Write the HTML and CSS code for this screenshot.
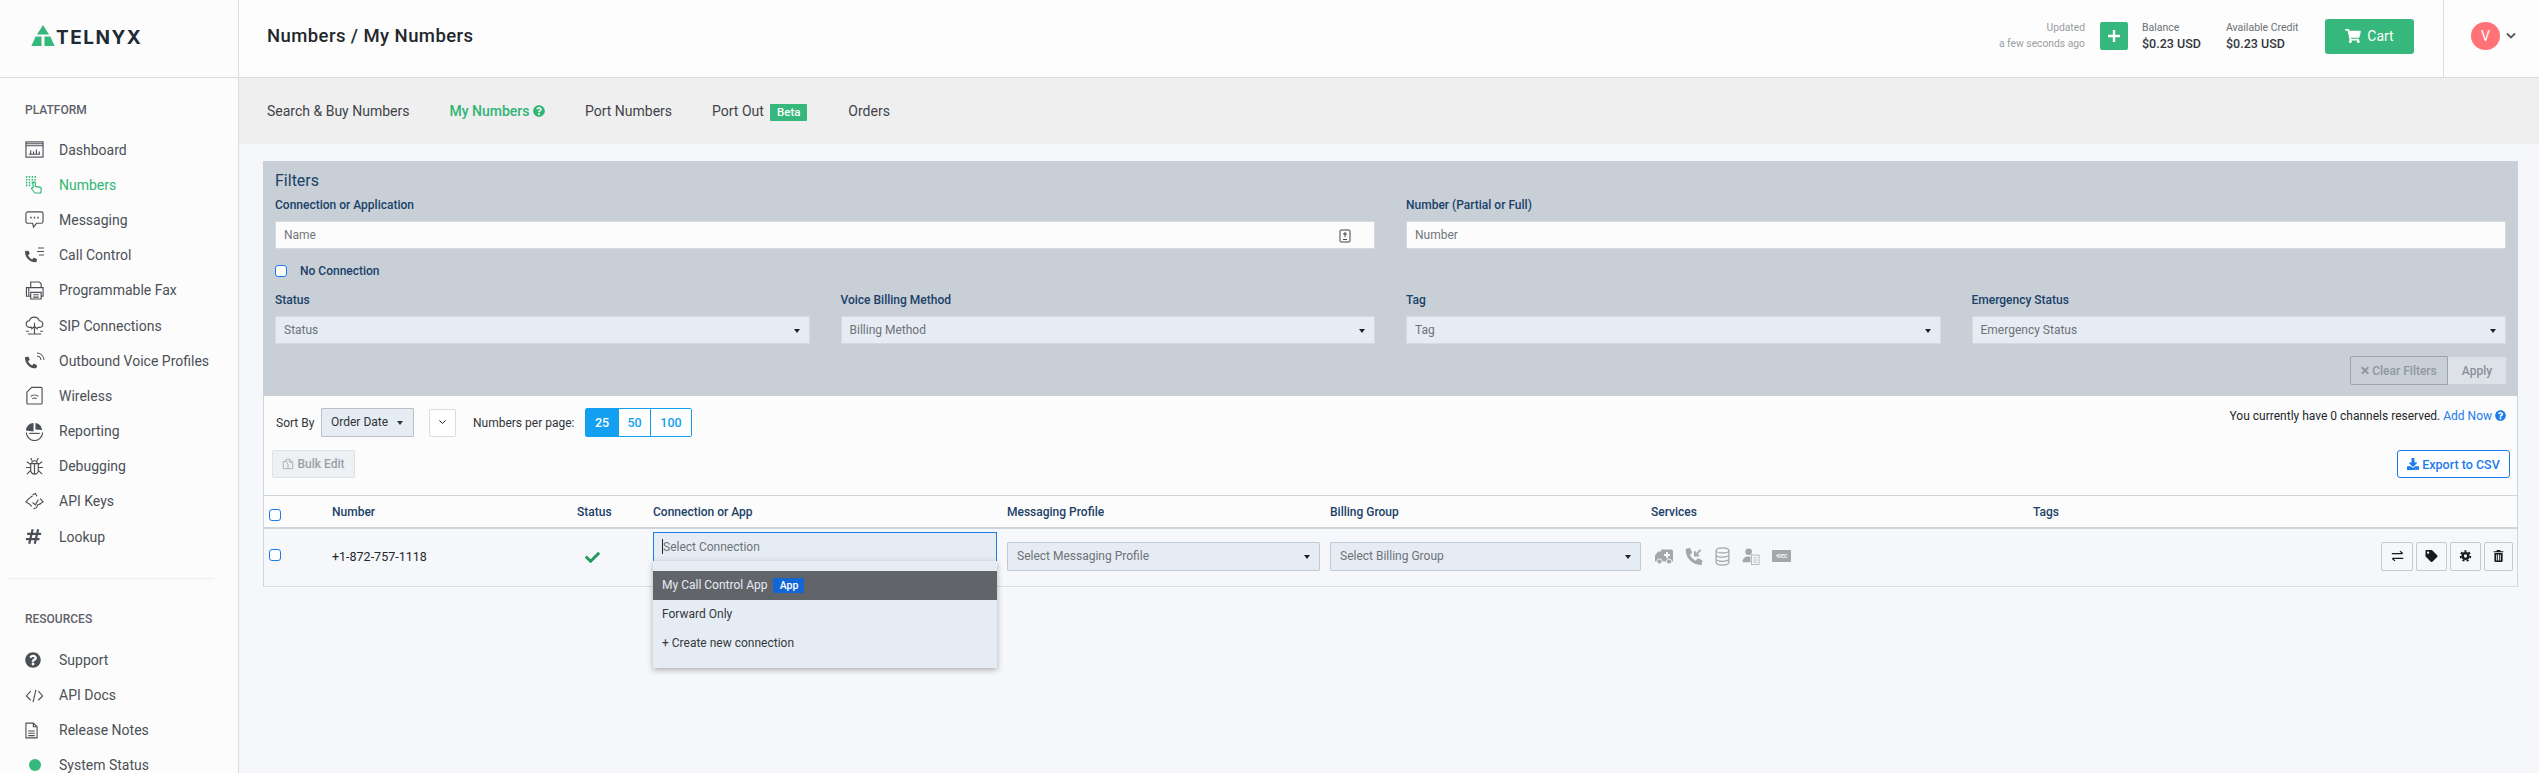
FILE: index.html
```html
<!DOCTYPE html>
<html lang="en">
<head>
    <meta charset="UTF-8">
    <title>Numbers / My Numbers</title>
    <link rel="stylesheet" href="styles.css">
</head>
<body>
    <svg class="defs" width="0" height="0">
        <symbol id="i-phone" viewBox="0 0 512 512"><path transform="matrix(-1 0 0 1 512 0)" d="M493.4 24.6l-104-24c-11.3-2.6-22.9 3.3-27.5 13.9l-48 112c-4.2 9.8-1.4 21.3 6.9 28l60.6 49.6c-36 76.7-98.9 140.5-177.2 177.2l-49.6-60.6c-6.8-8.3-18.2-11.1-28-6.9l-112 48C3.9 366.5-2 378.1.6 389.4l24 104C27.1 504.2 36.7 512 48 512c256.1 0 464-207.5 464-464 0-11.2-7.7-20.9-18.6-23.4z"/></symbol>
        <symbol id="i-question" viewBox="0 0 512 512"><path d="M504 256c0 136.997-111.043 248-248 248S8 392.997 8 256C8 119.083 119.043 8 256 8s248 111.083 248 248zM262.655 90c-54.497 0-89.255 22.957-116.549 63.758-3.536 5.286-2.353 12.415 2.715 16.258l34.699 26.31c5.205 3.947 12.621 3.008 16.665-2.122 17.864-22.658 30.113-35.797 57.303-35.797 20.429 0 45.698 13.148 45.698 32.958 0 14.976-12.363 22.667-32.534 33.976C247.128 238.528 216 254.941 216 296v4c0 6.627 5.373 12 12 12h56c6.627 0 12-5.373 12-12v-1.333c0-28.462 83.186-29.647 83.186-106.667 0-58.002-60.165-102-116.531-102zM256 338c-25.365 0-46 20.635-46 46 0 25.364 20.635 46 46 46s46-20.636 46-46c0-25.365-20.635-46-46-46z"/></symbol>
    </svg>

    <div class="app">
        <!-- Sidebar -->
        <aside class="sidebar">
            <div class="logo">
                <svg class="logo-mark" viewBox="0 0 24 22"><path d="M12 0l6 9.5H6z"/><path d="M4.6 11.5h5.9V21H0.4z"/><path d="M13.5 11.5h5.9l4.2 9.5H13.5z"/></svg>
                <span class="logo-text">TELNYX</span>
            </div>
            <div class="nav-title nav-title-first">PLATFORM</div>
            <nav class="nav">
                <a class="nav-item"><svg class="nav-icon" viewBox="0 0 20 18"><rect x="1" y="1" width="18" height="16"/><path d="M1 5h18M1 3h18M4 14h12M6 14v-4M9 14v-3M12 14v-5M15 14v-3"/></svg>Dashboard</a>
                <a class="nav-item active"><svg class="nav-icon" viewBox="0 0 20 20"><path class="dots" d="M1 2h1.500M4 2h1.500M7 2h1.500M10 2h1.500M1 5h1.500M4 5h1.500M7 5h1.500M10 5h1.500M1 8h1.500M4 8h1.500M7 8h1.500M1 11h1.500M4 11h1.500"/><path d="M8.500 14V8.500a1.200 1.200 0 0 1 2.400 0V12l4.500.8c1.200.2 1.800 1.100 1.700 2.200l-.5 4H10.500l-3.300-4c-.9-1.300.6-2.400 1.300-1z"/></svg>Numbers</a>
                <a class="nav-item"><svg class="nav-icon" viewBox="0 0 20 18"><path d="M3 1h14a2 2 0 0 1 2 2v8a2 2 0 0 1-2 2h-5l-3 4-1-4H3a2 2 0 0 1-2-2V3a2 2 0 0 1 2-2z"/><path class="dots" d="M5.500 7h1.500M9.300 7h1.500M13 7h1.500"/></svg>Messaging</a>
                <a class="nav-item"><svg class="nav-fill nav-small" viewBox="0 0 512 512"><use href="#i-phone"/></svg><svg class="nav-lines" viewBox="0 0 9 12"><path d="M2 1h6M1 4.500h7M3 8h5"/></svg>Call Control</a>
                <a class="nav-item"><svg class="nav-icon" viewBox="0 0 20 20"><path d="M6 7V1h9l2 2v4M4 7H1.500v9H4zM4 7h15v9h-2M6 12h11v7H6zM8.500 14.500h6M8.500 17h6M4 16h2"/></svg>Programmable Fax</a>
                <a class="nav-item"><svg class="nav-icon" viewBox="0 0 20 20"><path d="M5 12a3.500 3.500 0 0 1-.5-7 5.500 5.500 0 0 1 10.500 0 3.500 3.500 0 0 1 .5 7h-2.500M7.500 12H5M10 7v12M10 11l-3.500 3M10 11l3.500 3M1 16h3M16 16h3M3 19h14"/></svg>SIP Connections</a>
                <a class="nav-item"><svg class="nav-fill nav-small" viewBox="0 0 512 512"><use href="#i-phone"/></svg><svg class="nav-lines" viewBox="0 0 9 12"><path d="M1 4a4 4 0 0 1 4 4M1 1a7 7 0 0 1 7 7"/></svg>Outbound Voice Profiles</a>
                <a class="nav-item"><svg class="nav-icon" viewBox="0 0 20 20"><path d="M7 1.500h10a1 1 0 0 1 1 1V18a1 1 0 0 1-1 1H3a1 1 0 0 1-1-1V6.500zM6 11a6 6 0 0 1 8 0M7.800 13.500a3.500 3.500 0 0 1 4.400 0M10 16v.1"/></svg>Wireless</a>
                <a class="nav-item"><svg class="nav-icon" viewBox="0 0 20 20"><path class="pie" d="M9 1a8 8 0 0 0-8 8l8 1zM11 1v7l7 .5A8 8 0 0 0 11 1z"/><path d="M1.500 11a8.500 8.500 0 0 0 17 0"/><path d="M4.500 12h11"/></svg>Reporting</a>
                <a class="nav-item"><svg class="nav-icon" viewBox="0 0 20 20"><path d="M6 7h8v7a4 4 0 0 1-8 0zM7 7a3 3 0 0 1 6 0M10 7v11M1 11h5M14 11h5M2 5l4 3M18 5l-4 3M2 18l4-4M18 18l-4-4M6 1l1.500 3M14 1l-1.500 3"/></svg>Debugging</a>
                <a class="nav-item"><svg class="nav-icon" viewBox="0 0 20 20"><path d="M8 3l3-1.500 1.500 3M4 7L1 10.500 5 13M16 7l3 3.500-4 2.500M9 18l3-1.500 1.500-3 3-1M4 7l4-3M7 15l-2-2M8 11l3 2.500 3-5.500"/></svg>API Keys</a>
                <a class="nav-item"><svg class="nav-icon nav-bold" viewBox="0 0 20 20"><path d="M9 1.500L5 18.500M15.500 1.500l-4 17M2.500 7h16.500M1 13h16"/></svg>Lookup</a>
            </nav>
            <div class="nav-divider"></div>
            <div class="nav-title">RESOURCES</div>
            <nav class="nav">
                <a class="nav-item"><svg class="nav-fill" viewBox="0 0 512 512"><use href="#i-question"/></svg>Support</a>
                <a class="nav-item"><svg class="nav-icon" viewBox="0 0 20 20"><path d="M6 5.500L1.500 10.500 6 15M14 5.500l4.500 5L14 15M11.500 4L8.500 17"/></svg>API Docs</a>
                <a class="nav-item"><svg class="nav-icon nav-doc" viewBox="0 0 14 18"><path d="M1 1h8l4 4v12H1zM9 1v4h4M3.500 9.500h7M3.500 12h7M3.500 14.500h7"/></svg>Release Notes</a>
                <a class="nav-item"><span class="status-dot"></span>System Status</a>
            </nav>
        </aside>

        <div class="main">
            <!-- Top bar -->
            <header class="topbar">
                <h1 class="page-title">Numbers / My Numbers</h1>
                <div class="updated">Updated<br>a few seconds ago</div>
                <button class="add-funds"><svg viewBox="0 0 14 14"><path d="M7 1v12M1 7h12"/></svg></button>
                <div class="money money-balance"><span>Balance</span><b>$0.23 USD</b></div>
                <div class="money money-credit"><span>Available Credit</span><b>$0.23 USD</b></div>
                <button class="cart"><svg viewBox="0 0 576 512"><path d="M528.12 301.319l47.273-208C578.806 78.301 567.391 64 551.99 64H159.208l-9.166-44.81C147.758 8.021 137.93 0 126.529 0H24C10.745 0 0 10.745 0 24v16c0 13.255 10.745 24 24 24h69.883l70.248 343.435C147.325 417.1 136 435.222 136 456c0 30.928 25.072 56 56 56s56-25.072 56-56c0-15.674-6.447-29.835-16.824-40h209.647C430.447 426.165 424 440.326 424 456c0 30.928 25.072 56 56 56s56-25.072 56-56c0-22.172-12.888-41.332-31.579-50.405l5.517-24.276c3.413-15.018-8.002-29.319-23.403-29.319H218.117l-6.545-32h293.145c11.206 0 20.92-7.754 23.403-18.681z"/></svg>Cart</button>
                <div class="user">
                    <span class="avatar">V</span>
                    <svg class="user-chevron" viewBox="0 0 10 7"><path d="M1 1.500l4 4 4-4"/></svg>
                </div>
            </header>

            <!-- Tabs -->
            <div class="tabs">
                <a class="tab">Search &amp; Buy Numbers</a>
                <a class="tab tab-active">My Numbers <svg class="tab-help" viewBox="0 0 512 512"><use href="#i-question"/></svg></a>
                <a class="tab">Port Numbers</a>
                <a class="tab">Port Out <span class="beta">Beta</span></a>
                <a class="tab">Orders</a>
            </div>

            <div class="content">
                <!-- Filters -->
                <section class="filters">
                    <h2 class="filters-title">Filters</h2>
                    <div class="filter-grid">
                        <div class="field span-2">
                            <label class="field-label">Connection or Application</label>
                            <div class="text-input">
                                <input type="text" placeholder="Name">
                                <svg class="input-icon" viewBox="0 0 12 14"><rect x="1" y="1" width="10" height="12" rx="1"/><path d="M6 3v5M4 5h4M4 10.500h4"/></svg>
                            </div>
                        </div>
                        <div class="field span-2">
                            <label class="field-label">Number (Partial or Full)</label>
                            <div class="text-input"><input type="text" placeholder="Number"></div>
                        </div>
                    </div>
                    <label class="no-connection"><input class="check" type="checkbox">No Connection</label>
                    <div class="filter-grid">
                        <div class="field">
                            <label class="field-label">Status</label>
                            <div class="select">Status<i class="caret"></i></div>
                        </div>
                        <div class="field">
                            <label class="field-label">Voice Billing Method</label>
                            <div class="select">Billing Method<i class="caret"></i></div>
                        </div>
                        <div class="field">
                            <label class="field-label">Tag</label>
                            <div class="select">Tag<i class="caret"></i></div>
                        </div>
                        <div class="field">
                            <label class="field-label">Emergency Status</label>
                            <div class="select">Emergency Status<i class="caret"></i></div>
                        </div>
                    </div>
                    <div class="filter-actions">
                        <button class="btn-clear"><svg viewBox="0 0 352 512"><path d="M242.72 256l100.07-100.07c12.28-12.28 12.28-32.19 0-44.48l-22.24-22.24c-12.28-12.28-32.19-12.28-44.48 0L176 189.28 75.93 89.21c-12.28-12.28-32.19-12.28-44.48 0L9.21 111.45c-12.28 12.28-12.28 32.19 0 44.48L109.28 256 9.21 356.07c-12.28 12.28-12.28 32.19 0 44.48l22.24 22.24c12.28 12.28 32.2 12.28 44.48 0L176 322.72l100.07 100.07c12.28 12.28 32.2 12.28 44.48 0l22.24-22.24c12.28-12.28 12.28-32.19 0-44.48L242.72 256z"/></svg>Clear Filters</button>
                        <button class="btn-apply">Apply</button>
                    </div>
                </section>

                <!-- Number list -->
                <section class="list">
                    <div class="toolbar">
                        <span class="sort-label">Sort By</span>
                        <div class="sort-select">Order Date<i class="caret"></i></div>
                        <button class="sort-dir"><svg viewBox="0 0 10 7"><path d="M1.500 1.500L5 5l3.500-3.500"/></svg></button>
                        <span class="per-page-label">Numbers per page:</span>
                        <div class="per-page">
                            <button class="page-btn selected">25</button>
                            <button class="page-btn">50</button>
                            <button class="page-btn">100</button>
                        </div>
                        <div class="channels">You currently have 0 channels reserved. <a>Add Now <svg viewBox="0 0 512 512"><use href="#i-question"/></svg></a></div>
                    </div>
                    <div class="toolbar-second">
                        <button class="bulk-edit"><svg viewBox="0 0 14 14"><path d="M5 4V1.500h4L12.500 5v7.500H7M5 4H1.500v8.500H7V7.500zM9 1.500V5h3.500"/></svg>Bulk Edit</button>
                        <button class="export"><svg viewBox="0 0 512 512"><path d="M216 0h80c13.300 0 24 10.700 24 24v168h87.700c17.800 0 26.700 21.500 14.100 34.100L269.700 378.300c-7.500 7.500-19.800 7.500-27.300 0L90.100 226.100c-12.600-12.600-3.700-34.100 14.100-34.100H192V24c0-13.300 10.700-24 24-24zm296 376v112c0 13.300-10.700 24-24 24H24c-13.300 0-24-10.700-24-24V376c0-13.300 10.700-24 24-24h146.700l49 49c20.100 20.100 52.500 20.100 72.600 0l49-49H488c13.300 0 24 10.700 24 24zm-124 88c0-11-9-20-20-20s-20 9-20 20 9 20 20 20 20-9 20-20zm64 0c0-11-9-20-20-20s-20 9-20 20 9 20 20 20 20-9 20-20z"/></svg>Export to CSV</button>
                    </div>

                    <table class="numbers">
                        <thead>
                            <tr>
                                <th class="col-check"><input class="check" type="checkbox"></th>
                                <th class="col-number">Number</th>
                                <th class="col-status">Status</th>
                                <th class="col-conn">Connection or App</th>
                                <th class="col-msg">Messaging Profile</th>
                                <th class="col-bill">Billing Group</th>
                                <th class="col-services">Services</th>
                                <th>Tags</th>
                            </tr>
                        </thead>
                        <tbody>
                            <tr>
                                <td><input class="check" type="checkbox"></td>
                                <td class="number-cell">+1-872-757-1118</td>
                                <td><svg class="ok" viewBox="0 0 512 512"><path d="M173.898 439.404l-166.4-166.4c-9.997-9.997-9.997-26.206 0-36.204l36.203-36.204c9.997-9.998 26.207-9.998 36.204 0L192 312.690 432.095 72.596c9.997-9.997 26.207-9.997 36.204 0l36.203 36.204c9.997 9.997 9.997 26.206 0 36.204l-294.400 294.401c-9.998 9.997-26.207 9.997-36.204-.001z"/></svg></td>
                                <td class="conn-cell">
                                    <div class="conn">
                                        <div class="conn-input"><span class="cursor"></span>Select Connection</div>
                                        <div class="conn-menu">
                                            <div class="conn-option highlighted">My Call Control App <span class="app-badge">App</span></div>
                                            <div class="conn-option">Forward Only</div>
                                            <div class="conn-option">+ Create new connection</div>
                                        </div>
                                    </div>
                                </td>
                                <td><div class="select row-select select-msg">Select Messaging Profile<i class="caret"></i></div></td>
                                <td><div class="select row-select select-bill">Select Billing Group<i class="caret"></i></div></td>
                                <td>
                                    <div class="services">
                                        <svg viewBox="0 0 18 16"><path d="M6 1h10a2 2 0 0 1 2 2v10H0V7l3-4h3z"/><circle class="hole" cx="4.500" cy="13" r="2.600"/><circle class="hole" cx="14" cy="13" r="2.600"/><path class="hole-line" d="M12 3.500v6M9 6.500h6"/></svg>
                                        <svg viewBox="0 0 18 18"><use href="#i-phone"/><path class="hole-arrow" d="M16 2l-6 6M10 3.500V8h4.500"/></svg>
                                        <svg class="db" viewBox="0 0 16 20"><ellipse cx="8" cy="3.500" rx="6.800" ry="2.700"/><path d="M1.200 3.500v13c0 1.500 3 2.700 6.800 2.700s6.800-1.200 6.800-2.700v-13M1.200 8c0 1.500 3 2.700 6.800 2.700s6.800-1.200 6.800-2.700M1.200 12.500c0 1.500 3 2.700 6.800 2.700s6.800-1.200 6.800-2.700"/></svg>
                                        <svg viewBox="0 0 18 18"><circle cx="6.500" cy="4" r="3.500"/><path d="M0 15c0-4 2.500-6 6.500-6 1.500 0 2 .3 2 .3V15z"/><rect class="paper" x="9.500" y="7.500" width="8" height="10"/><path class="paper-line" d="M11.500 10.500h4M11.500 12.800h4M11.500 15h4"/></svg>
                                        <span class="rec">&bull;REC</span>
                                    </div>
                                </td>
                                <td>
                                    <div class="row-actions">
                                        <button class="act act-swap"><svg viewBox="0 0 16 14"><path d="M1 4h13M11 1l3.500 3M15 10H2M5 13l-3.500-3"/></svg></button>
                                        <button class="act act-tag"><svg class="solid" viewBox="0 0 512 512"><path d="M0 252.118V48C0 21.490 21.490 0 48 0h204.118a48 48 0 0 1 33.941 14.059l211.882 211.882c18.745 18.745 18.745 49.137 0 67.882L293.823 497.941c-18.745 18.745-49.137 18.745-67.882 0L14.059 286.059A48 48 0 0 1 0 252.118zM112 64c-26.510 0-48 21.490-48 48s21.490 48 48 48 48-21.490 48-48-21.490-48-48-48z"/></svg></button>
                                        <button class="act act-cog"><svg viewBox="0 0 14 14"><circle class="teeth" cx="7" cy="7" r="5.700"/><circle class="body" cx="7" cy="7" r="4.800"/><circle class="hole" cx="7" cy="7" r="1.900"/></svg></button>
                                        <button class="act act-trash"><svg class="solid" viewBox="0 0 14 16"><path d="M5 0h4l1 1.500h3.500V3H.500V1.500H4zM1.500 4h11v10.500a1.500 1.500 0 0 1-1.500 1.500H3a1.500 1.500 0 0 1-1.500-1.500zM4 6v8h1.300V6zm2.350 0v8h1.300V6zm2.350 0v8H10V6z" fill-rule="evenodd"/></svg></button>
                                    </div>
                                </td>
                            </tr>
                        </tbody>
                    </table>
                </section>
            </div>
        </div>
    </div>
</body>
</html>
```

FILE: styles.css
```css
* {
    box-sizing: border-box;
}

html, body {
    margin: 0;
    padding: 0;
    height: 100%;
    overflow: hidden;
}

body {
    font-family: Roboto, "Liberation Sans", sans-serif;
    font-size: 13px;
    color: #23272c;
    background: #f5f7fa;
}

button {
    font-family: inherit;
    cursor: pointer;
}

.defs {
    position: absolute;
}

.app {
    display: flex;
    height: 773px;
}

/* Sidebar */
.sidebar {
    flex: 0 0 239px;
    background: #fcfcfc;
    border-right: 1px solid #dcdcdc;
    height: 810px;
}

.logo {
    height: 78px;
    border-bottom: 1px solid #dcdcdc;
    margin-right: -1px;
    padding: 25px 0 0 31px;
    display: flex;
    align-items: flex-start;
}

.logo-mark {
    width: 24px;
    height: 22px;
    fill: #36b77b;
}

.logo-text {
    font-family: Inter, Roboto, sans-serif;
    font-weight: 700;
    font-size: 19px;
    line-height: 22px;
    letter-spacing: 1.5px;
    color: #1e2a35;
    margin: 2px 0 0 1px;
}

.nav-title {
    font-size: 12px;
    font-weight: 500;
    line-height: 14px;
    color: #5d6269;
    margin: 33px 0 0 25px;
    padding-bottom: 16px;
}

.nav-title-first {
    margin-top: 25px;
    padding-bottom: 15px;
}

.nav-item {
    display: flex;
    align-items: center;
    height: 35.2px;
    padding-left: 25px;
    font-size: 14px;
    color: #4b5057;
    position: relative;
}

.nav-item.active {
    color: #2fb574;
}

.nav-icon, .nav-fill {
    width: 19px;
    height: 19px;
    margin-right: 15px;
    flex: none;
}

.nav-icon {
    fill: none;
    stroke: currentColor;
    stroke-width: 1.2;
}

.nav-icon .dots {
    stroke-width: 1.800;
}

.nav-icon .pie {
    fill: currentColor;
    stroke: none;
}

.nav-icon.nav-bold {
    stroke-width: 2.600;
    width: 17px;
    margin-right: 17px;
}

.nav-icon.nav-doc {
    width: 13px;
    height: 17px;
    margin-right: 21px;
}

.nav-fill {
    width: 16px;
    height: 16px;
    fill: #4b5057;
    margin-right: 18px;
}

.nav-small {
    width: 12px;
    height: 13px;
    margin-top: 3px;
    margin-right: 0;
}

.nav-lines {
    width: 9px;
    height: 12px;
    fill: none;
    stroke: #4b5057;
    stroke-width: 1;
    margin: -5px 14px 0 -1px;
    flex: none;
}

.nav-divider {
    height: 1px;
    background: #eceef0;
    margin: 24px 24px 0 7px;
}

.status-dot {
    width: 12px;
    height: 12px;
    border-radius: 50%;
    background: #36b77b;
    margin: 0 18px 0 4px;
    flex: none;
}

/* Top bar */
.main {
    flex: 1;
    min-width: 0;
}

.topbar {
    height: 78px;
    background: #fdfdfd;
    border-bottom: 1px solid #dcdcdc;
    display: flex;
    align-items: center;
    padding-left: 28px;
}

.page-title {
    margin: 0 auto 5px 0;
    font-size: 18.500px;
    font-weight: 500;
    letter-spacing: .42px;
    color: #23272c;
}

.updated {
    font-size: 10.300px;
    line-height: 16px;
    color: #9a9da1;
    text-align: right;
    margin: -5px 15px 0 0;
}

.add-funds {
    width: 28px;
    height: 28px;
    background: #36b77b;
    border: 0;
    border-radius: 2px;
    padding: 7px;
    margin: 0 14px 5px 0;
}

.add-funds svg {
    display: block;
    stroke: #fff;
    stroke-width: 2.400;
}

.money {
    display: flex;
    flex-direction: column;
    margin-bottom: 5px;
}

.money-balance {
    width: 84px;
}

.money-credit {
    width: 99px;
}

.money span {
    font-size: 10.500px;
    line-height: 15px;
    color: #6c7075;
}

.money b {
    font-size: 12.500px;
    font-weight: 500;
    line-height: 17px;
    color: #33373c;
}

.cart {
    width: 89px;
    height: 35px;
    background: #36b77b;
    border: 0;
    border-radius: 3px;
    color: #fff;
    font-size: 14px;
    margin-bottom: 5px;
    display: flex;
    align-items: center;
    justify-content: center;
}

.cart svg {
    width: 16px;
    height: 14px;
    fill: #fff;
    margin-right: 6px;
}

.user {
    width: 96px;
    height: 77px;
    margin-left: 29px;
    border-left: 1px solid #dcdcdc;
    display: flex;
    align-items: center;
    padding: 0 0 5px 27px;
}

.avatar {
    width: 29px;
    height: 28px;
    border-radius: 50%;
    background: #ff7378;
    color: #fff;
    font-size: 14px;
    line-height: 28px;
    text-align: center;
}

.user-chevron {
    width: 10px;
    height: 7px;
    margin: -2px 0 0 6px;
    fill: none;
    stroke: #55595e;
    stroke-width: 1.800;
}

/* Tabs */
.tabs {
    height: 66px;
    background: #efefef;
    display: flex;
    align-items: center;
    padding: 0 0 0 28px;
    font-size: 14px;
    color: #3f4349;
}

.tab {
    margin-right: 40px;
    display: flex;
    align-items: center;
    white-space: pre;
}

.tab-active {
    color: #2fb574;
    font-weight: 500;
}

.tab-help {
    width: 12px;
    height: 12px;
    fill: #2fb574;
}

.beta {
    width: 37px;
    background: #36b77b;
    color: #fff;
    font-size: 11.500px;
    font-weight: 500;
    text-align: center;
    height: 17px;
    line-height: 17px;
    border-radius: 1px;
    margin: 2px 1px 0 3px;
}

/* Filters */
.content {
    padding: 17px 21px 0 24px;
}

.filters {
    height: 235px;
    background: #c8cfd6;
    padding: 9px 12px 0;
}

.filters-title {
    margin: 0;
    font-size: 16px;
    font-weight: 400;
    line-height: 22px;
    color: #1b4168;
}

.filter-grid {
    display: grid;
    grid-template-columns: repeat(4, 1fr);
    column-gap: 31px;
}

.span-2 {
    grid-column: span 2;
}

.field-label {
    display: block;
    font-size: 12px;
    font-weight: 500;
    line-height: 16px;
    color: #1b4168;
    margin-bottom: 8px;
}

.span-2 .field-label {
    margin-top: 5px;
}

.text-input {
    position: relative;
}

.text-input input {
    display: block;
    width: 100%;
    height: 28px;
    background: #fcfcfc;
    border: 1px solid #d5dae0;
    border-radius: 1px;
    padding: 0 8px;
    font-family: inherit;
    font-size: 12px;
    outline: none;
}

.text-input input::placeholder {
    color: #72767b;
    opacity: 1;
}

.input-icon {
    position: absolute;
    right: 24px;
    top: 8px;
    width: 12px;
    height: 14px;
    fill: none;
    stroke: #444;
    stroke-width: 1;
}

.check {
    appearance: none;
    -webkit-appearance: none;
    width: 12px;
    height: 12px;
    margin: 0;
    background: #fff;
    border: 1px solid #1b7bec;
    border-radius: 3px;
    display: block;
}

.no-connection {
    display: flex;
    align-items: center;
    height: 20px;
    margin: 12px 0 11px;
    font-size: 12px;
    font-weight: 500;
    color: #1b4168;
}

.no-connection .check {
    margin-right: 13px;
}

.select {
    position: relative;
    height: 28px;
    line-height: 26px;
    background: #e6ecf3;
    border: 1px solid #d5dae0;
    border-radius: 1px;
    padding: 0 8px;
    font-size: 12px;
    color: #6d7278;
}

.caret {
    position: absolute;
    right: 9px;
    top: 12px;
    border-top: 4px solid #222;
    border-left: 3.500px solid transparent;
    border-right: 3.500px solid transparent;
}

.filter-actions {
    display: flex;
    justify-content: flex-end;
    align-items: center;
    margin-top: 12px;
}

.btn-clear {
    height: 29px;
    width: 98px;
    background: #c8cfd6;
    border: 1px solid #9aa3ae;
    border-radius: 2px 0 0 2px;
    color: #8e97a2;
    font-size: 12px;
    font-weight: 500;
    padding: 0;
}

.btn-clear svg {
    width: 8px;
    height: 11px;
    fill: #8e97a2;
    margin-right: 3px;
    vertical-align: -1px;
}

.btn-apply {
    height: 27px;
    width: 58px;
    background: #dce2e8;
    border: 0;
    color: #8a8f96;
    font-size: 12px;
    font-weight: 500;
    padding: 0;
}

/* List */
.list {
    background: #fcfcfc;
    border-left: 1px solid #cdd5dd;
    border-right: 1px solid #cdd5dd;
    padding-top: 12px;
}

.toolbar {
    display: flex;
    align-items: center;
    height: 29px;
    padding-left: 12px;
    font-size: 12px;
    color: #30343a;
}

.sort-label {
    width: 45px;
}

.sort-select {
    position: relative;
    width: 93px;
    height: 29px;
    line-height: 27px;
    background: #e6ecf3;
    border: 1px solid #b9c0c8;
    border-radius: 1px;
    padding-left: 9px;
}

.sort-select .caret {
    right: 10px;
    top: 12px;
    border-top-color: #30343a;
}

.sort-dir {
    width: 27px;
    height: 28px;
    margin-left: 15px;
    background: #fff;
    border: 1px solid #d9dde2;
    border-radius: 2px;
    padding: 0 8px;
}

.sort-dir svg {
    display: block;
    fill: none;
    stroke: #222;
    stroke-width: 1.100;
}

.per-page-label {
    width: 112px;
    margin-left: 17px;
}

.per-page {
    display: flex;
    height: 29px;
    border: 1px solid #14a0f0;
    border-radius: 2px;
}

.page-btn {
    width: 32px;
    border: 0;
    border-right: 1px solid #14a0f0;
    background: #fff;
    color: #14a0f0;
    font-size: 12.500px;
    font-weight: 500;
    padding: 0;
}

.page-btn:last-child {
    width: 40px;
    border-right: 0;
}

.page-btn.selected {
    width: 33px;
    background: #14a0f0;
    color: #fff;
}

.channels {
    margin-left: auto;
    padding-right: 11px;
    margin-top: -13px;
    font-size: 12px;
    color: #23272c;
}

.channels a {
    color: #1b7bec;
}

.channels svg {
    width: 11px;
    height: 11px;
    fill: #1b7bec;
    vertical-align: -1px;
}

.toolbar-second {
    display: flex;
    justify-content: space-between;
    align-items: flex-start;
    height: 45px;
    margin-top: 13px;
    padding: 0 7px 0 8px;
}

.bulk-edit {
    width: 83px;
    height: 28px;
    background: #edf1f4;
    border: 1px solid #dde2e7;
    border-radius: 2px;
    color: #9aa0a6;
    font-size: 12px;
    font-weight: 500;
    padding: 0;
}

.bulk-edit svg {
    width: 12px;
    height: 12px;
    fill: none;
    stroke: #9aa0a6;
    stroke-width: .9;
    vertical-align: -2px;
    margin-right: 3px;
}

.export {
    width: 113px;
    height: 28px;
    background: #fff;
    border: 1px solid #1b7bec;
    border-radius: 3px;
    color: #1b7bec;
    font-size: 12.500px;
    font-weight: 500;
    padding: 0;
}

.export svg {
    width: 12px;
    height: 12px;
    fill: #1b7bec;
    vertical-align: -1px;
    margin-right: 3px;
}

/* Table */
.numbers {
    width: 100%;
    table-layout: fixed;
    border-collapse: collapse;
}

.numbers th {
    height: 32px;
    padding: 1px 0 0;
    text-align: left;
    font-size: 12px;
    font-weight: 500;
    color: #1b4168;
    background: #fcfcfc;
    border-top: 1px solid #cdd5dd;
    border-bottom: 2px solid #cdd5dd;
}

.col-check { width: 68px; }
.col-number { width: 245px; }
.col-status { width: 76px; }
.col-conn { width: 354px; }
.col-msg { width: 323px; }
.col-bill { width: 321px; }
.col-services { width: 382px; }

.numbers td {
    height: 59px;
    padding: 0;
    background: #f5f7fa;
    font-size: 12.500px;
    color: #23272c;
    border-bottom: 1px solid #d7dde3;
}

.numbers .number-cell {
    padding-bottom: 2px;
}

.numbers .check {
    margin-left: 5px;
}

.numbers th .check {
    margin-top: 6px;
}

.numbers td .check {
    margin-top: -5px;
}

.ok {
    width: 15px;
    height: 15px;
    display: block;
    margin: 0 0 0 8px;
    fill: #23985f;
}

.conn-cell {
    vertical-align: top;
}

.conn {
    position: relative;
    width: 344px;
    margin-top: 3px;
}

.conn-input {
    height: 29px;
    line-height: 26px;
    background: #e6ecf3;
    border: 1px solid #1b7bec;
    border-bottom: 0;
    padding-left: 8px;
    font-size: 12px;
    color: #6d7278;
    display: flex;
    align-items: center;
}

.cursor {
    width: 1px;
    height: 15px;
    background: #222;
}

.conn-menu {
    position: absolute;
    left: 0;
    right: 0;
    top: 29px;
    background: #e6ecf3;
    padding: 10px 0;
    box-shadow: 0 2px 6px rgba(0, 0, 0, 0.3);
    z-index: 2;
}

.conn-option {
    height: 29px;
    line-height: 29px;
    padding-left: 9px;
    color: #34383d;
    font-size: 12px;
}

.conn-option.highlighted {
    background: #616469;
    color: #e6ecf3;
}

.app-badge {
    display: inline-block;
    height: 15px;
    line-height: 15px;
    width: 31px;
    margin-left: 3px;
    text-align: center;
    background: #1266d6;
    color: #fff;
    font-size: 10.500px;
    font-weight: 500;
    border-radius: 1px;
}

.row-select {
    height: 29px;
    line-height: 27px;
    border-color: #c3cad2;
    padding: 0 9px;
    margin-top: -2px;
}

.select-msg { width: 313px; }
.select-bill { width: 311px; }

.services {
    display: flex;
    align-items: center;
    margin: -2px 0 0 4px;
}

.services svg {
    width: 18px;
    height: 17px;
    margin-right: 12px;
    fill: #a4a6a8;
    flex: none;
}

.services .hole { fill: #a4a6a8; stroke: #f5f7fa; stroke-width: 1; }
.services .hole-line { fill: none; stroke: #f5f7fa; stroke-width: 2; }
.services .hole-arrow { fill: none; stroke: #a4a6a8; stroke-width: 2; }
.services .db { fill: none; stroke: #a4a6a8; stroke-width: 1.300; width: 15px; height: 19px; }
.services .paper { fill: #f5f7fa; stroke: #a4a6a8; stroke-width: .8; }
.services .paper-line { fill: none; stroke: #a4a6a8; stroke-width: .7; }

.rec {
    display: block;
    width: 19px;
    height: 12px;
    background: #a4a6a8;
    color: #f5f7fa;
    font-size: 5.500px;
    font-weight: 700;
    line-height: 12px;
    text-align: center;
}

.row-actions {
    display: flex;
    justify-content: flex-end;
    gap: 3px;
    padding-right: 4px;
    margin-top: -2px;
}

.act {
    height: 29px;
    width: 31px;
    background: #f5f7fa;
    border: 1px solid #c4c9cf;
    border-radius: 2px;
    padding: 0;
    display: flex;
    align-items: center;
    justify-content: center;
}

.act svg {
    width: 13px;
    height: 12px;
    fill: none;
    stroke: #17191c;
    stroke-width: 1.500;
}

.act .solid {
    fill: #17191c;
    stroke: none;
}

.act-swap { width: 32px; }
.act-tag { width: 31px; }
.act-trash { width: 29px; }

.act-cog svg {
    overflow: visible;
}

.act-cog .teeth {
    fill: none;
    stroke: #17191c;
    stroke-width: 2;
    stroke-dasharray: 2.500 2.470;
}

.act-cog .body {
    fill: #17191c;
    stroke: none;
}

.act-cog .hole {
    fill: #f5f7fa;
    stroke: none;
}
```
